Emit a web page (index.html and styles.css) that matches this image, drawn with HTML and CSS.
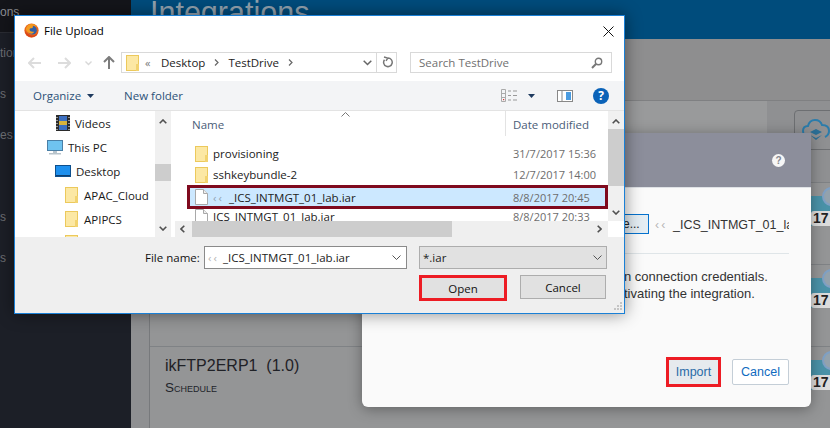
FILE: index.html
```html
<!DOCTYPE html>
<html lang="en">
<head>
<meta charset="utf-8">
<title>File Upload</title>
<link rel="stylesheet" href="styles.css">
</head>
<body>
<div class="page">
  <aside class="sidebar">
    <div class="side-top"><span>ons</span></div>
    <div class="side-item first">tion</div>
    <div class="side-item">s</div>
    <div class="side-item">es</div>
    <div class="side-item gap">s</div>
    <div class="side-item">s</div>
  </aside>
  <main class="main">
    <header class="banner"><h1>Integrations</h1></header>
    <div class="toolbar-band"></div>
    <div class="list">
      <div class="row first-row"><div class="cloud-btn"><svg width="30" height="26" viewBox="0 0 30 26"><path d="M8 20c-4 0-6-3-6-6s2-5 5-5c1-4 4-6 7-6 4 0 6 2 7 5 4 0 7 2 7 6 0 3-2 5-4 6" fill="none" stroke="#2b7cab" stroke-width="2"/><path d="M15 12l6 3-6 3-6-3zM9 18l6 3 6-3-6 5z" fill="#2b6f96"/></svg></div></div>
      <div class="row"><div class="tile"><span class="badge"></span><b>17</b></div></div>
      <div class="row"><div class="tile"><span class="badge"></span><b>17</b></div></div>
      <div class="row last">
        <div class="int-name">ikFTP2ERP1 &nbsp;(1.0)</div>
        <div class="int-kind">Schedule</div>
        <div class="tile"><span class="badge"></span><b>17</b></div>
      </div>
    </div>
  </main>

  <section class="modal">
    <div class="modal-head"><span class="modal-help">?</span></div>
    <div class="modal-body">
      <div class="file-line">
        <span class="browse">e...</span>
        <span class="chosen"><span class="faint">‹‹</span>_ICS_INTMGT_01_la</span>
      </div>
      <div class="modal-text">
        <p>n connection credentials.</p>
        <p>tivating the integration.</p>
      </div>
      <div class="modal-actions">
        <button class="mbtn import">Import</button>
        <button class="mbtn cancel">Cancel</button>
      </div>
    </div>
  </section>

  <section class="dialog">
    <div class="titlebar">
      <svg class="ff" width="15" height="15" viewBox="0 0 16 16"><circle cx="8" cy="8" r="7.6" fill="#e8641b"/><circle cx="9" cy="7.6" r="4.6" fill="#2f5fa8"/><path d="M2 6c1-3 3-5 6-5 3 0 5 1 6 4-2-2-4-2-5-2 1 1 1 2 0 2-1 1-3 0-3 2s3 3 5 2c-1 2-3 3-5 2-2-1-4-3-4-5z" fill="#f39a1f"/><path d="M1 8c0 4 3 7 7 7s6-2 7-5c-2 3-5 4-8 3-3-1-5-3-6-5z" fill="#d8431a"/></svg>
      <span class="title">File Upload</span>
      <svg class="close" width="11" height="11" viewBox="0 0 11 11"><path d="M.5.5l10 10M10.500.5l-10 10" stroke="#111" stroke-width="1"/></svg>
    </div>
    <div class="addr-row">
      <svg class="nav-arrow" width="13" height="12" viewBox="0 0 13 12"><path d="M6 1L1 6l5 5M1 6h12" fill="none" stroke="#dcdcdc" stroke-width="2"/></svg>
      <svg class="nav-arrow fwd" width="13" height="12" viewBox="0 0 13 12"><path d="M7 1l5 5-5 5M12 6H0" fill="none" stroke="#dcdcdc" stroke-width="2"/></svg>
      <svg class="nav-drop" width="7" height="5" viewBox="0 0 7 5"><path d="M.5.5l3 3 3-3" fill="none" stroke="#d8d8d8" stroke-width="1.4"/></svg>
      <svg class="nav-up" width="12" height="13" viewBox="0 0 12 13"><path d="M1 6l5-5 5 5M6 1v12" fill="none" stroke="#7c7c7c" stroke-width="2"/></svg>
      <div class="addr-box">
        <span class="folder addr-folder"></span>
        <span class="crumb-sep first-sep">«</span>
        <span class="crumb">Desktop</span>
        <svg class="crumb-arrow" width="5" height="7" viewBox="0 0 5 7"><path d="M1 .5l3 3-3 3" fill="none" stroke="#666" stroke-width="1.2"/></svg>
        <span class="crumb">TestDrive</span>
        <svg class="crumb-arrow" width="5" height="7" viewBox="0 0 5 7"><path d="M1 .5l3 3-3 3" fill="none" stroke="#666" stroke-width="1.2"/></svg>
        <svg class="addr-drop" width="9" height="6" viewBox="0 0 9 6"><path d="M.7.7l3.800 3.800L8.300.7" fill="none" stroke="#666" stroke-width="1.500"/></svg>
        <span class="addr-refresh"><svg width="11" height="12" viewBox="0 0 11 12"><path d="M6 2a4.300 4.300 0 1 1-3.500 1.700M2 1l3.800 1.100L4 4.800" fill="none" stroke="#777" stroke-width="1.500"/></svg></span>
      </div>
      <div class="search-box">
        <span>Search TestDrive</span>
        <svg width="12" height="12" viewBox="0 0 12 12"><circle cx="7.500" cy="4.500" r="3.200" fill="none" stroke="#777" stroke-width="1.400"/><path d="M5.200 6.800L1 11" stroke="#777" stroke-width="2"/></svg>
      </div>
    </div>
    <div class="cmd-bar">
      <span class="cmd">Organize</span>
      <svg class="caret" width="7" height="4" viewBox="0 0 7 4"><path d="M0 0h7L3.500 4z" fill="#1e3a5f"/></svg>
      <span class="cmd new">New folder</span>
      <span class="cmd-spacer"></span>
      <svg class="views" width="17" height="13" viewBox="0 0 17 13"><path d="M.5.500h4v12h-4zM.5 4.500h4M.5 8.500h4" fill="none" stroke="#aaa"/><path d="M7 2h3M12 2h4M7 6.500h3M12 6.500h4M7 11h3M12 11h4" stroke="#999"/><rect x="2" y="10" width="1.200" height="1.200" fill="#d33"/></svg>
      <svg class="caret views-caret" width="7" height="4" viewBox="0 0 7 4"><path d="M0 0h7L3.500 4z" fill="#1e3a5f"/></svg>
      <svg class="pane" width="16" height="12" viewBox="0 0 16 12"><rect x=".5" y=".5" width="15" height="11" fill="#fff" stroke="#888"/><rect x="9" y="2" width="5" height="8" fill="#4a9be0"/><path d="M5 1v10" stroke="#888"/></svg>
      <span class="help">?</span>
    </div>
    <div class="browser">
      <div class="nav-pane">
        <ul class="tree">
          <li class="lv1 vid"><svg class="ico" width="14" height="16" viewBox="0 0 14 16"><rect width="14" height="16" fill="#2b2b2b"/><rect x="3" y="1" width="8" height="14" fill="#3c6fc0"/><rect x="3" y="6" width="8" height="4" fill="#d9b33a"/><path d="M1 2v1M1 5v1M1 8v1M1 11v1M1 14v1M13 2v1M13 5v1M13 8v1M13 11v1M13 14v1" stroke="#fff"/></svg>Videos</li>
          <li class="lv0"><svg class="ico" width="16" height="15" viewBox="0 0 16 15"><rect x=".5" y=".5" width="15" height="10" fill="#6fc3f0" stroke="#4a7fa6"/><rect x="6" y="11" width="4" height="2" fill="#b8c4cc"/><rect x="2" y="13" width="12" height="1.500" fill="#b8c4cc"/></svg>This PC</li>
          <li class="lv1"><svg class="ico" width="16" height="12" viewBox="0 0 16 12"><rect x=".5" y=".5" width="15" height="11" fill="#1e90ee" stroke="#0e4f8c"/><rect x="1" y="10" width="14" height="1" fill="#0e3f70"/></svg>Desktop</li>
          <li class="lv2"><span class="folder"></span>APAC_Cloud</li>
          <li class="lv2"><span class="folder"></span>APIPCS</li>
          <li class="lv2"><span class="folder"></span></li>
        </ul>
        <div class="vscroll nav-scroll">
          <svg class="sb-arrow" width="8" height="5" viewBox="0 0 8 5"><path d="M.7 4.300L4 1l3.300 3.300" fill="none" stroke="#505050" stroke-width="1.600"/></svg>
          <svg class="sb-arrow down" width="8" height="5" viewBox="0 0 8 5"><path d="M.7.7L4 4l3.300-3.300" fill="none" stroke="#505050" stroke-width="1.600"/></svg>
          <span class="thumb nav-thumb"></span>
        </div>
      </div>
      <div class="files">
        <div class="file-list">
          <div class="file-head">
            <span class="col-name">Name</span>
            <svg class="sort" width="9" height="5" viewBox="0 0 9 5"><path d="M.5 4.500l4-4 4 4" fill="none" stroke="#777"/></svg>
            <span class="col-date">Date modified</span>
          </div>
          <div class="file-row"><span class="folder"></span><span class="fname">provisioning</span><span class="fdate">31/7/2017 15:36</span></div>
          <div class="file-row"><span class="folder"></span><span class="fname">sshkeybundle-2</span><span class="fdate">12/7/2017 14:00</span></div>
          <div class="file-row selected"><svg class="doc" width="13" height="16" viewBox="0 0 13 16"><path d="M.5.500h8l4 4v11H.5z" fill="#fff" stroke="#a9a9a9"/><path d="M8.500.500v4h4" fill="#eee" stroke="#a9a9a9"/></svg><span class="fname"><span class="faint">‹‹</span>_ICS_INTMGT_01_lab.iar</span><span class="fdate">8/8/2017 20:45</span></div>
          <div class="file-row after-sel"><svg class="doc" width="13" height="16" viewBox="0 0 13 16"><path d="M.5.500h8l4 4v11H.5z" fill="#fff" stroke="#a9a9a9"/><path d="M8.500.500v4h4" fill="#eee" stroke="#a9a9a9"/></svg><span class="fname">ICS_INTMGT_01_lab.iar</span><span class="fdate">8/8/2017 20:33</span></div>
        </div>
        <div class="vscroll list-scroll">
          <svg class="sb-arrow" width="8" height="5" viewBox="0 0 8 5"><path d="M.7 4.300L4 1l3.300 3.300" fill="none" stroke="#505050" stroke-width="1.600"/></svg>
          <svg class="sb-arrow down" width="8" height="5" viewBox="0 0 8 5"><path d="M.7.7L4 4l3.300-3.300" fill="none" stroke="#505050" stroke-width="1.600"/></svg>
          <span class="thumb list-thumb"></span>
        </div>
        <div class="hscroll">
          <svg width="5" height="8" viewBox="0 0 5 8"><path d="M4.300.7L1 4l3.300 3.300" fill="none" stroke="#505050" stroke-width="1.600"/></svg>
          <span class="hthumb"></span>
          <svg width="5" height="8" viewBox="0 0 5 8"><path d="M.7.7L4 4 .7 7.300" fill="none" stroke="#505050" stroke-width="1.600"/></svg>
        </div>
        <div class="corner"></div>
      </div>
    </div>
    <div class="footer">
      <div class="foot-row">
        <label class="fn-label">File name:</label>
        <div class="fn-input"><span><span class="faint">‹‹</span>_ICS_INTMGT_01_lab.iar</span><svg width="9" height="5" viewBox="0 0 9 5"><path d="M.5.500l4 4 4-4" fill="none" stroke="#555"/></svg></div>
        <div class="fn-filter"><span>*.iar</span><svg width="9" height="5" viewBox="0 0 9 5"><path d="M.5.500l4 4 4-4" fill="none" stroke="#555"/></svg></div>
      </div>
      <div class="foot-btns">
        <button class="wbtn open">Open</button>
        <button class="wbtn">Cancel</button>
      </div>
      <svg class="grip" width="9" height="9" viewBox="0 0 9 9"><path d="M7 0h2v2H7zM4 3h2v2H4zM7 3h2v2H7zM1 6h2v2H1zM4 6h2v2H4zM7 6h2v2H7z" fill="#c4c4c4"/></svg>
    </div>
  </section>
</div>
</body>
</html>
```
FILE: styles.css
```css
* { box-sizing: border-box; }
html, body { margin: 0; padding: 0; }
body { width: 830px; height: 428px; overflow: hidden; font-family: "Liberation Sans", Arial, sans-serif; }
.page { position: relative; width: 830px; height: 428px; display: flex; overflow: hidden; background: #8f9092; }

.sidebar { width: 131px; flex: none; background: #1c1f27; color: #8c8e93; font-size: 12px; overflow: hidden; }
.side-top { height: 33px; background: #14151a; padding-top: 5px; border-bottom: 1px solid #2a2c33; }
.side-top span, .side-item { display: block; line-height: 14px; }
.side-item { height: 41px; color: #6c6e73; }
.side-item.first { margin-top: 13px; }
.side-item.gap { margin-top: 41px; }

.main { flex: 1; min-width: 0; display: flex; flex-direction: column; }
.banner { height: 39px; background: #004c7c; padding-left: 19px; overflow: hidden; flex: none; }
.banner h1 { margin: -6px 0 0; font-size: 30.500px; line-height: 36px; font-weight: 400; color: #93a2ae; }
.toolbar-band { height: 62px; flex: none; background: #8e8e8f; border-bottom: 1px solid #7f8082; }
.list { flex: 1; margin-left: 18px; border-left: 1px solid #77797c; background: #949596; }
.row { position: relative; height: 82px; border-bottom: 1px solid #7f8285; overflow: hidden; }
.first-row { background: linear-gradient(90deg, #999a9b 617px, #8f9092 617px); }
.row.last { border-bottom: 0; padding: 8px 0 0 15px; }
.cloud-btn { position: absolute; left: 644px; top: 9px; width: 50px; height: 40px; border: 1px solid #6d6f72; border-radius: 4px; padding: 6px 0 0 6px; }
.tile { position: absolute; left: 650px; top: 13px; width: 40px; height: 30px; background: #4a92a8; }
.badge { position: absolute; left: 22px; top: -9px; width: 19px; height: 19px; border: 2px solid #7fa0c4; border-radius: 50%; background: #93a2ad; }
.tile b { position: absolute; left: 11px; top: 15px; width: 24px; height: 15px; padding-left: 2px; background: #dcdcdc; border-radius: 3px; font-size: 14px; line-height: 15px; color: #222; }
.int-name { font-size: 16px; line-height: 22px; color: #1f2126; }
.int-kind { margin-top: 4px; font-size: 13.500px; line-height: 14px; font-variant: small-caps; color: #22242a; }

.modal { position: absolute; left: 362px; top: 133px; width: 449px; height: 274px; background: #fafafa; border-radius: 0 0 6px 6px; box-shadow: 0 2px 14px rgba(0,0,0,.35); display: flex; flex-direction: column; overflow: hidden; }
.modal-head { height: 55px; flex: none; background: #8c8e9b; border-bottom: 1px solid #dfe2e6; padding: 21px 0 0 410px; }
.modal-help { display: block; width: 13px; height: 13px; border-radius: 50%; background: #f6f6f6; color: #84868f; font-size: 10px; font-weight: 700; line-height: 13px; text-align: center; }
.modal-body { flex: 1; padding: 26px 22px 20px 262px; display: flex; flex-direction: column; }
.file-line { display: flex; height: 40px; border-bottom: 1px solid #dfe5e8; gap: 6px; align-items: flex-start; white-space: nowrap; overflow: hidden; flex: none; }
.browse { flex: none; width: 29px; height: 20px; border: 1px solid #0572ce; background: #e4edf3; font-size: 12px; line-height: 18px; color: #222; margin-left: -4px; padding-left: 2px; }
.chosen { font-size: 12.500px; line-height: 22px; color: #333; }
.faint { display: inline-block; width: 16px; opacity: .35; letter-spacing: 2px; }
.chosen .faint { width: 18px; }
.fn-input .faint { width: 15px; }
.modal-text { margin-top: 14px; font-size: 13px; line-height: 17px; color: #333; white-space: nowrap; }
.modal-text p { margin: 0; }
.modal-actions { margin-top: auto; display: flex; justify-content: flex-end; align-items: center; gap: 11px; }
.mbtn { font-family: "Liberation Sans", Arial, sans-serif; font-size: 12.500px; padding: 0; color: #0f6bbf; border-radius: 2px; }
.import { width: 55px; height: 30px; background: #e6eaee; border: 3px solid #ed1c24; border-radius: 0; color: #2a6aa8; }
.cancel { width: 57px; height: 26px; background: #fff; border: 1px solid #c4ced7; }

.dialog { position: absolute; left: 14px; top: 15px; width: 611px; height: 299px; background: #fff; border: 1px solid #1a80d6; box-shadow: 0 0 16px rgba(0,0,0,.45); display: flex; flex-direction: column; font-family: "Open Sans", "Noto Sans", sans-serif; font-size: 11px; color: #1a1a1a; }
.titlebar { height: 36px; flex: none; display: flex; align-items: flex-start; padding: 7px 0 0 9px; }
.ff { flex: none; }
.title { margin-left: 5px; font-size: 11.500px; line-height: 16px; color: #000; }
.close { margin-left: auto; margin-right: 10px; margin-top: 3px; }
.addr-row { height: 29px; flex: none; display: flex; align-items: flex-start; position: relative; }
.nav-arrow { margin: 5px 0 0 13px; }
.nav-arrow.fwd { margin-left: 17px; }
.nav-drop { margin: 9px 0 0 14px; }
.nav-up { margin: 4px 0 0 11px; }
.addr-box { margin-left: 6px; width: 276px; height: 21px; border: 1px solid #d9d9d9; display: flex; align-items: center; padding-left: 4px; }
.addr-folder { margin: 0; }
.crumb-sep { margin-left: 6px; color: #777; font-size: 11px; width: 9px; }
.crumb { margin-left: 7px; color: #222; font-size: 11.500px; }
.crumb-arrow { margin-left: 9px; }
.crumb-arrow + .crumb { margin-left: 9px; }
.addr-drop { margin-left: auto; margin-right: 4px; }
.addr-refresh { width: 20px; height: 19px; border-left: 1px solid #d9d9d9; padding: 3px 0 0 5px; line-height: 0; }
.search-box { margin-left: 13px; width: 202px; height: 21px; border: 1px solid #d9d9d9; display: flex; align-items: center; justify-content: space-between; padding: 0 8px; color: #707070; font-size: 11.500px; }
.cmd-bar { height: 30px; flex: none; background: #f3f4f6; border-bottom: 1px solid #e3e3e3; display: flex; align-items: center; padding-left: 18px; }
.cmd { color: #2d5278; font-size: 11.500px; }
.caret { margin-left: 6px; }
.cmd.new { margin-left: 30px; }
.cmd-spacer { flex: 1; }
.views-caret { margin-left: 10px; }
.pane { margin-left: 22px; }
.help { margin: 0 15px 0 20px; width: 16px; height: 16px; border-radius: 50%; background: #0a62b8; color: #fff; font-size: 12px; font-weight: 700; line-height: 16px; text-align: center; }

.browser { height: 126px; flex: none; display: flex; overflow: hidden; }
.nav-pane { width: 156px; flex: none; position: relative; display: flex; }
.tree { list-style: none; margin: 0; padding: 0; width: 140px; height: 126px; overflow: hidden; }
.tree li { height: 24px; flex: none; display: flex; align-items: center; white-space: nowrap; font-size: 11.500px; color: #1a1a1a; }
.lv1 { padding-left: 40px; }
.lv1.vid { padding-left: 41px; }
.lv0 { padding-left: 32px; }
.lv2 { padding-left: 50px; }
.ico { flex: none; margin-right: 5px; }
.lv2 .folder { margin-right: 6px; }
.vscroll { position: relative; background: #f0f0f0; width: 16px; flex: none; }
.sb-arrow { position: absolute; left: 4px; top: 8px; }
.sb-arrow.down { top: auto; bottom: 6px; }
.thumb { position: absolute; left: 0; right: 0; background: #cdcdcd; }
.nav-thumb { top: 53px; height: 17px; }
.list-thumb { top: 18px; height: 57px; }
.nav-scroll { height: 126px; }
.files { flex: 1; min-width: 0; margin-left: 2px; display: grid; grid-template-columns: 435px 16px; grid-template-rows: 110px 16px; }
.file-list { overflow: hidden; }
.file-head { height: 32px; position: relative; }
.col-name { position: absolute; left: 19px; top: 6px; color: #4a5d78; font-size: 11.500px; }
.sort { position: absolute; left: 168px; top: 1px; }
.col-date { position: absolute; left: 340px; top: 6px; color: #4a5d78; font-size: 11.500px; }
.file-head::after { content: ""; position: absolute; left: 332px; top: 0; height: 25px; border-left: 1px solid #e3e3e3; }
.file-row { height: 21px; display: flex; align-items: center; padding-left: 22px; white-space: nowrap; font-size: 11.500px; }
.file-row .folder, .doc { flex: none; margin-right: 5px; }
.fname { width: 300px; flex: none; color: #222; }
.fdate { color: #6d6d6d; font-size: 11px; }
.file-row.selected { height: 24px; margin-left: 14px; padding-left: 5px; background: #cce8ff; border: 3px solid #7f0a1e; }
.file-row.after-sel { margin-top: -3px; }
.hscroll { background: #efefef; display: flex; align-items: center; padding: 0 6px 0 5px; margin-left: 2px; }
.hthumb { width: 260px; height: 16px; background: #cdcdcd; margin: 0 auto 0 7px; }
.corner { background: #fff; }

.folder { display: inline-block; position: relative; flex: none; width: 13px; height: 16px; background: #fce8a4; border: 1px solid #ecc95c; }
.folder::after { content: ""; position: absolute; right: -1px; bottom: -1px; width: 3px; height: 7px; background: #f2d370; }

.footer { flex: 1; background: #efefef; position: relative; padding-top: 9px; }
.foot-row { display: flex; align-items: center; height: 23px; padding-left: 130px; }
.fn-label { width: 59px; flex: none; font-size: 11.500px; color: #111; }
.fn-input { width: 203px; height: 23px; background: #fff; border: 1px solid #8a8a8a; display: flex; align-items: center; justify-content: space-between; padding: 0 5px 0 3px; font-size: 11.500px; color: #222; }
.fn-filter { margin-left: 12px; width: 188px; height: 23px; background: #e1e1e1; border: 1px solid #adadad; display: flex; align-items: center; justify-content: space-between; padding: 0 4px 0 3px; font-size: 11.500px; color: #222; }
.foot-btns { display: flex; margin: 6px 0 0 404px; }
.wbtn { width: 86px; height: 24px; padding: 0; background: #e1e1e1; border: 1px solid #adadad; font-family: "Open Sans", "Noto Sans", sans-serif; font-size: 11.500px; color: #111; }
.wbtn.open { width: 88px; height: 26px; margin-right: 13px; border: 3px solid #ed1c24; }
.grip { position: absolute; right: 2px; bottom: 2px; }
```
